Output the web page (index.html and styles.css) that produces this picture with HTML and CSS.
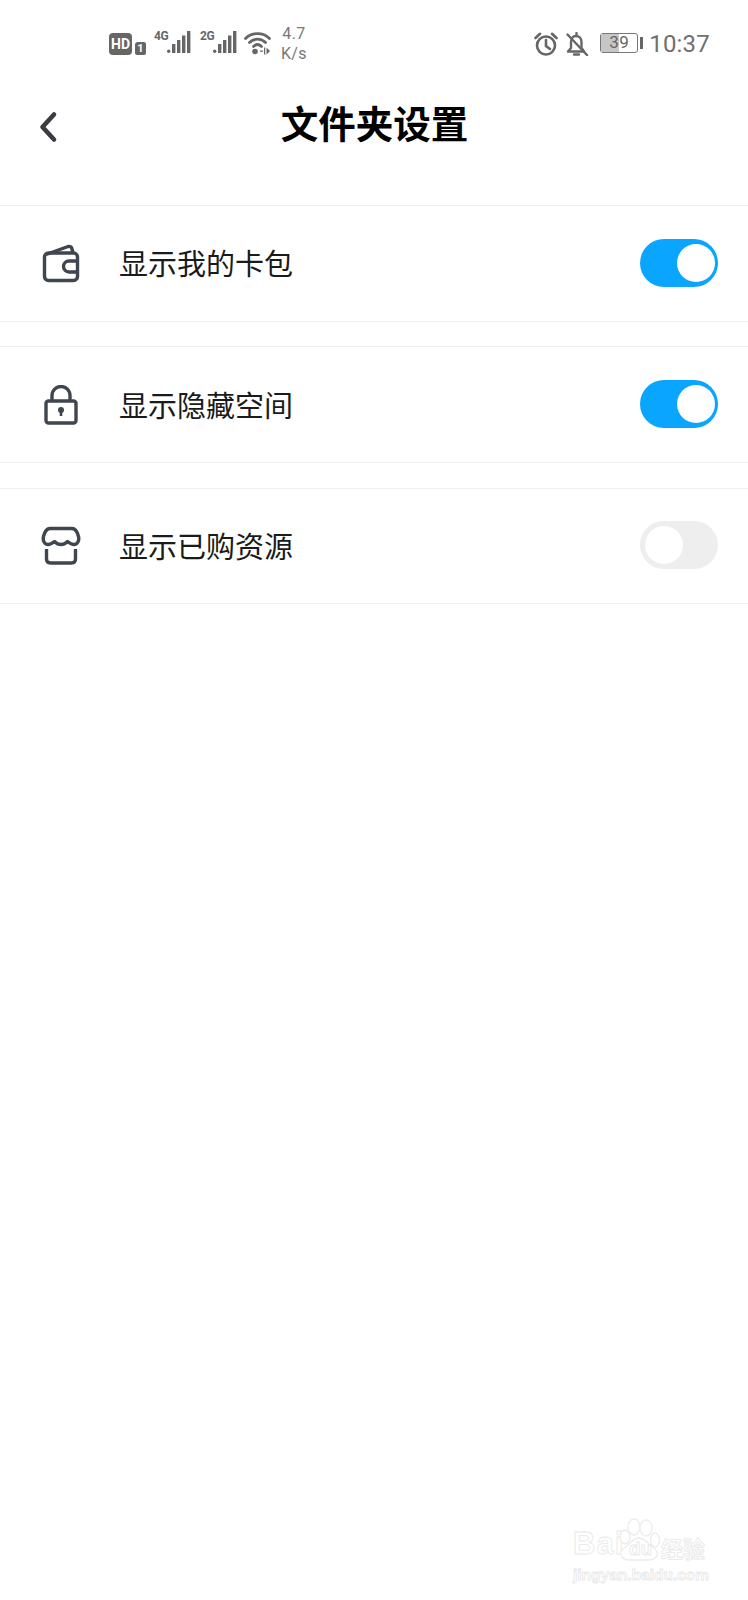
FILE: index.html
```html
<!DOCTYPE html>
<html lang="zh-CN">
<head>
    <meta charset="UTF-8">
    <meta name="viewport" content="width=device-width, initial-scale=1.0">
    <title>文件夹设置</title>
    <link rel="stylesheet" href="styles.css">
</head>
<body>
    <div class="page">
        <div class="status-bar">
            <div class="status-left">
                <span class="hd">HD</span>
                <span class="sim">1</span>
                <span class="net">
                    <span class="net-label">4G</span>
                    <svg width="24" height="22" viewBox="0 0 24 22"><g fill="#666"><circle cx="1.700" cy="20.300" r="1.700"/><rect x="5" y="13" width="3.400" height="9"/><rect x="10" y="9" width="3.400" height="13"/><rect x="15" y="4.500" width="3.400" height="17.500"/><rect x="20" y="0" width="3.400" height="22"/></g></svg>
                </span>
                <span class="net net-second">
                    <span class="net-label">2G</span>
                    <svg width="24" height="22" viewBox="0 0 24 22"><g fill="#666"><circle cx="1.700" cy="20.300" r="1.700"/><rect x="5" y="13" width="3.400" height="9"/><rect x="10" y="9" width="3.400" height="13"/><rect x="15" y="4.500" width="3.400" height="17.500"/><rect x="20" y="0" width="3.400" height="22"/></g></svg>
                </span>
                <svg class="wifi" width="28" height="24" viewBox="0 0 28 24">
                    <g fill="none" stroke="#666" stroke-width="2.800" stroke-linecap="round">
                        <path d="M1.500 7.500C8 1 19 1 25.500 7.500"/>
                        <path d="M5.500 11.500C10 7 17 7 21.500 11.500"/>
                        <path d="M9.500 15.500C12 13 15 13 17.500 15.500"/>
                    </g>
                    <circle cx="11" cy="20.500" r="2.800" fill="#666"/>
                    <path d="M20 16.500v7h1.200v-7zM22.500 16.500v7l3.500-3.500zM16 19.500h3v1.200h-3z" fill="#666"/>
                </svg>
                <span class="speed"><span>4.7</span><span>K/s</span></span>
            </div>
            <div class="status-right">
                <svg width="24" height="24" viewBox="0 0 24 24" fill="none" stroke="#666" stroke-width="2.600">
                    <circle cx="12" cy="13.500" r="9"/>
                    <path d="M12 8v6l4 3" stroke-linecap="round"/>
                    <path d="M1.500 6L6 1.800M22.500 6L18 1.800" stroke-linecap="round"/>
                </svg>
                <svg class="bell" width="24" height="24" viewBox="0 0 24 24" fill="none" stroke="#666" stroke-width="2.400">
                    <path d="M3 19.500h16l-2.500-3.500V10c0-3.500-2.500-6-5.500-6S6 6.500 6 10v6z" stroke-linejoin="round"/>
                    <path d="M9 22.500h5M11.500 1v3" stroke-linecap="round"/>
                    <path d="M2.500 2.500L22 23" stroke-linecap="round"/>
                </svg>
                <span class="battery"><span class="battery-fill"></span><span class="battery-num">39</span></span>
                <span class="battery-tip"></span>
                <span class="time">10:37</span>
            </div>
        </div>

        <div class="header">
            <svg class="back" width="20" height="32" viewBox="0 0 20 32">
                <path d="M16 3.500L4.500 16 16 28.500" fill="none" stroke="#3a3d42" stroke-width="4.600" stroke-linecap="round" stroke-linejoin="round"/>
            </svg>
            <h1>文件夹设置</h1>
        </div>

        <div class="list">
            <div class="row">
                <svg class="row-icon" width="40" height="40" viewBox="0 0 40 40" fill="none" stroke="#3f4650" stroke-width="3.400">
                    <rect x="3.500" y="10" width="33" height="27.500" rx="4"/>
                    <path d="M5 11.500L27 3.500c2-.6 3.500.5 4 2.500l1 4"/>
                    <path d="M36 18h-8a5.500 5.500 0 0 0 0 11h8"/>
                </svg>
                <span class="row-text">显示我的卡包</span>
                <span class="switch on"><span class="knob"></span></span>
            </div>
            <div class="row">
                <svg class="row-icon" width="40" height="40" viewBox="0 0 40 40" fill="none" stroke="#3f4650" stroke-width="3.400">
                    <rect x="5" y="16" width="30" height="22" rx="2.500"/>
                    <path d="M11 16v-5.500a9 9 0 0 1 18 0V16"/>
                    <circle cx="20" cy="25" r="3" fill="#3f4650" stroke="none"/>
                    <path d="M20 25v6" stroke-width="2.600"/>
                </svg>
                <span class="row-text">显示隐藏空间</span>
                <span class="switch on"><span class="knob"></span></span>
            </div>
            <div class="row">
                <svg class="row-icon" width="40" height="40" viewBox="0 0 40 40" fill="none" stroke="#3f4650" stroke-width="3.400">
                    <path d="M9 2.500h22c3 0 5 2 6.500 8 1 4-1 8-4.500 8-2.500 0-4-1-6.500-3-2.500 2.500-4.500 3-6.500 3s-4-.5-6.500-3c-2.500 2-4 3-6.500 3-3.500 0-5.500-4-4.500-8C4 4.500 6 2.500 9 2.500z" stroke-linejoin="round"/>
                    <path d="M5.500 23v10c0 2.500 1.500 4 4 4h21c2.500 0 4-1.500 4-4V23"/>
                </svg>
                <span class="row-text">显示已购资源</span>
                <span class="switch"><span class="knob"></span></span>
            </div>
        </div>

        <div class="watermark">
            <div class="wm-top">
                <span class="wm-bai">Bai</span>
                <span class="wm-paw">
                    <svg width="42" height="44" viewBox="0 0 42 44" fill="#fff" stroke="#ececec" stroke-width="1.300">
                        <ellipse cx="6" cy="19" rx="5" ry="7"/>
                        <ellipse cx="15" cy="9" rx="6" ry="8"/>
                        <ellipse cx="27" cy="10" rx="6" ry="8"/>
                        <ellipse cx="36" cy="22" rx="4.500" ry="7"/>
                        <path d="M20 20c5 0 8 4 12 8 5 3 7 6 6 9-1 3-4 5-8 5H10c-4 0-7-2-8-5-1-3 1-6 6-9 4-4 7-8 12-8z"/>
                    </svg>
                    <span class="wm-du">du</span>
                </span>
                <span class="wm-cn">经验</span>
            </div>
            <div class="wm-url">jingyan.baidu.com</div>
        </div>
    </div>
</body>
</html>
```

FILE: styles.css
```css
html, body {
    margin: 0;
    padding: 0;
    background-color: #FFFFFF;
}

.page {
    position: relative;
    width: 748px;
    height: 1600px;
    overflow: hidden;
    font-family: "Noto Sans CJK SC", "Roboto", sans-serif;
    color: #111111;
}

/* status bar */
.status-bar {
    box-sizing: border-box;
    display: flex;
    justify-content: space-between;
    align-items: center;
    height: 84px;
    padding-top: 3px;
    color: #666666;
    font-family: "Roboto", sans-serif;
}

.status-left {
    display: flex;
    align-items: center;
    padding-left: 109px;
}

.status-right {
    display: flex;
    align-items: center;
    padding-right: 38px;
}

.hd {
    width: 23px;
    height: 22px;
    line-height: 22px;
    background-color: #666666;
    border-radius: 4px;
    color: #FFFFFF;
    font-size: 14px;
    font-weight: 700;
    text-align: center;
}

.sim {
    align-self: flex-end;
    width: 11px;
    height: 13px;
    line-height: 13px;
    margin-left: 3px;
    margin-bottom: 9px;
    background-color: #666666;
    border-radius: 3px 2px 2px 2px;
    color: #FFFFFF;
    font-size: 11px;
    font-weight: 700;
    text-align: center;
}

.net {
    display: flex;
    align-items: flex-start;
    margin-left: 8px;
    margin-bottom: 4px;
}

.net-second {
    margin-left: 9px;
}

.net-label {
    width: 13px;
    font-size: 12px;
    font-weight: 700;
    line-height: 11px;
    letter-spacing: -0.5px;
}

.wifi {
    margin-left: 7px;
    margin-bottom: 2px;
}

.speed {
    display: flex;
    flex-direction: column;
    align-items: center;
    margin-left: 9px;
    font-size: 16px;
    line-height: 20px;
    letter-spacing: 0.3px;
    color: #777777;
}

.bell {
    margin-left: 7px;
}

.battery {
    position: relative;
    box-sizing: border-box;
    width: 38px;
    height: 20px;
    margin-left: 11px;
    margin-bottom: 2px;
    border: 1.500px solid #777777;
    border-radius: 3px;
}

.battery-fill {
    display: block;
    width: 18px;
    height: 100%;
    background-color: #C6C6C6;
}

.battery-num {
    position: absolute;
    left: 8px;
    top: 0;
    font-size: 17px;
    line-height: 17px;
    letter-spacing: 0.5px;
    color: #666666;
}

.battery-tip {
    width: 3px;
    height: 12px;
    margin-left: 2px;
    margin-bottom: 2px;
    background-color: #666666;
}

.time {
    margin-left: 6px;
    font-size: 24px;
    letter-spacing: 0.2px;
    color: #707070;
}

/* header */
.header {
    position: relative;
    display: flex;
    justify-content: center;
    align-items: center;
    height: 84px;
}

.back {
    position: absolute;
    left: 38px;
    top: 27px;
}

h1 {
    margin: 0 0 10px 1px;
    font-size: 37.500px;
    font-weight: 700;
    color: #000000;
}

/* rows */
.list {
    display: flex;
    flex-direction: column;
    gap: 24.600px;
    margin-top: 37px;
}

.row {
    box-sizing: border-box;
    display: flex;
    align-items: center;
    height: 116.700px;
    padding: 0 30px 0 41px;
    border-top: 1px solid #F0F0F0;
    border-bottom: 1px solid #F0F0F0;
}

.row-icon {
    flex: none;
}

.row-text {
    flex: 1;
    margin-left: 38px;
    margin-bottom: 2px;
    font-size: 29px;
    color: #1a1a1a;
}

.switch {
    display: flex;
    align-items: center;
    box-sizing: border-box;
    width: 78px;
    height: 48px;
    margin-bottom: 1px;
    padding: 0 5px;
    background-color: #EEEEEE;
    border-radius: 24px;
}

.switch.on {
    justify-content: flex-end;
    padding: 0 3px;
    background-color: #0AA5FF;
}

.knob {
    width: 38px;
    height: 38px;
    background-color: #FFFFFF;
    border-radius: 50%;
}

/* baidu watermark */
.watermark {
    position: absolute;
    left: 573px;
    top: 1518px;
    width: 140px;
    color: #FFFFFF;
    -webkit-text-stroke: 0.800px #E8E8E8;
}

.wm-top {
    display: flex;
    align-items: flex-end;
    height: 44px;
}

.wm-bai {
    width: 46px;
    font-family: "Liberation Sans", sans-serif;
    font-size: 31px;
    font-weight: 700;
    letter-spacing: 1px;
    line-height: 36px;
}

.wm-paw {
    position: relative;
    width: 41px;
    height: 44px;
}

.wm-du {
    position: absolute;
    left: 10px;
    bottom: 3px;
    font-family: "Liberation Sans", sans-serif;
    font-size: 19px;
    font-weight: 700;
    line-height: 20px;
}

.wm-cn {
    margin-left: 1px;
    font-size: 22px;
    font-weight: 700;
    line-height: 30px;
    white-space: nowrap;
}

.wm-url {
    margin-top: 3px;
    font-family: "Liberation Sans", sans-serif;
    font-size: 15.500px;
    font-weight: 700;
    line-height: 20px;
    white-space: nowrap;
}
```
